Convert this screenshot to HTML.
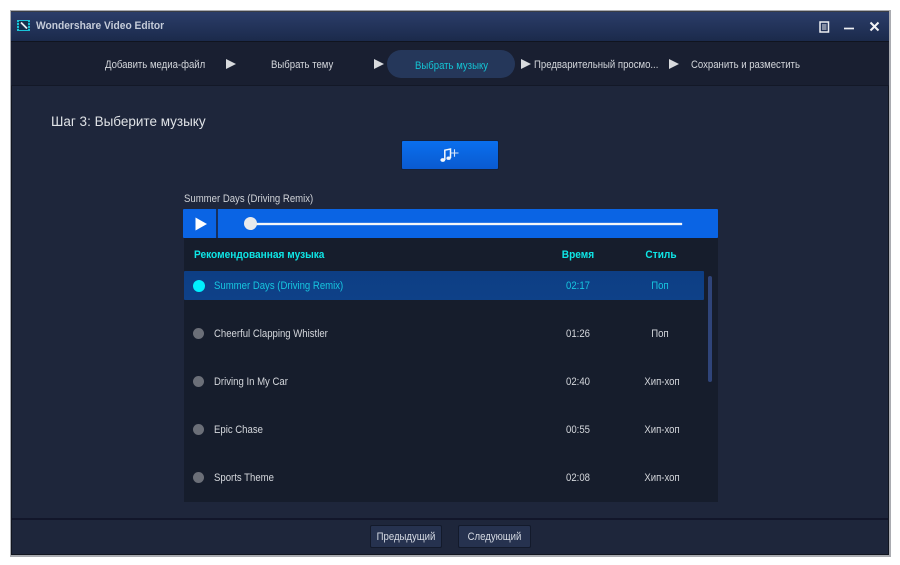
<!DOCTYPE html>
<html lang="ru"><head><meta charset="utf-8"><title>Wondershare Video Editor</title>
<style>
html,body{margin:0;padding:0;background:#fff;width:900px;height:565px;overflow:hidden}
body{position:relative;font-family:"Liberation Sans",sans-serif;color:#d4d7dc;font-size:11px}
div,span.t{position:absolute;box-sizing:border-box}
.t{white-space:nowrap;line-height:14px;height:14px;transform:scaleX(.87);transform-origin:0 50%}
.b{font-weight:bold;color:#0ee6e6;transform:scaleX(.92)}
svg{position:absolute;display:block}
.c{text-align:center;transform-origin:50% 50%}
</style></head><body>
<div style="left:10px;top:10px;width:881px;height:547px;background:#a9abb0"></div>
<div style="left:11px;top:11px;width:878px;height:544px;background:#1e263b;box-shadow:inset 0 0 0 1px #11151f"></div>
<div style="left:11px;top:11px;width:878px;height:30px;background:linear-gradient(#2b3d69,#1b2a4b);border-top:1px solid #3a3d44"></div>
<div style="left:11px;top:41px;width:878px;height:45px;background:#191f31;border-top:1px solid #10141f;border-bottom:1px solid #131827"></div>
<svg style="left:17px;top:20px" width="13" height="11" viewBox="0 0 13 11"><rect width="13" height="11" fill="#19c4d8"/><rect x="2" y="1" width="9" height="9" fill="#16304c"/><path d="M4 2.5l6 6" stroke="#e8eef2" stroke-width="1.8"/><path d="M0 2.5h2M0 5.5h2M0 8.5h2M11 2.5h2M11 5.5h2M11 8.5h2" stroke="#0d5a70"/></svg>
<span class="t" style="left:36px;top:19px;font-weight:bold;color:#c5ccd9;transform:scaleX(.93)">Wondershare Video Editor</span>
<svg style="left:819px;top:21px" width="61" height="12" viewBox="0 0 61 12"><rect x="1" y="1" width="8.5" height="10" fill="none" stroke="#eceef1" stroke-width="1.5"/><path d="M3 4h4.5M3 6h4.5M3 8h4.5" stroke="#e6e8ec"/><path d="M25 7.5h10" stroke="#eef0f3" stroke-width="1.7"/><path d="M51.5 1.5l8 8M59.5 1.5l-8 8" stroke="#f2f3f5" stroke-width="2"/></svg>

<span class="t" style="left:105px;top:58px">Добавить медиа-файл</span>
<svg style="left:226px;top:59px" width="10" height="10"><path d="M0 0l10 5-10 5z" fill="#d8dadd"/></svg>
<span class="t" style="left:271px;top:58px">Выбрать тему</span>
<svg style="left:374px;top:59px" width="10" height="10"><path d="M0 0l10 5-10 5z" fill="#d8dadd"/></svg>
<div style="left:387px;top:50px;width:128px;height:28px;border-radius:14px;background:#25375a"></div>
<span class="t" style="left:415px;top:59px;color:#14c4d4">Выбрать музыку</span>
<svg style="left:521px;top:59px" width="10" height="10"><path d="M0 0l10 5-10 5z" fill="#d8dadd"/></svg>
<span class="t" style="left:534px;top:58px">Предварительный просмо...</span>
<svg style="left:669px;top:59px" width="10" height="10"><path d="M0 0l10 5-10 5z" fill="#d8dadd"/></svg>
<span class="t" style="left:691px;top:58px">Сохранить и разместить</span>

<span class="t" style="left:51px;top:115px;font-size:13.5px;color:#dfe2e6;transform:none">Шаг 3: Выберите музыку</span>

<div style="left:401px;top:140px;width:98px;height:30px;background:linear-gradient(#0a6fee,#0a5ad0);border:1px solid #14213c;border-radius:2px"></div>
<svg style="left:440px;top:147px" width="20" height="16" viewBox="0 0 20 16"><path d="M4.8 13V3.2L10.5 2v9" fill="none" stroke="#f4f7fb" stroke-width="1.5"/><ellipse cx="2.8" cy="13" rx="2.4" ry="1.9" fill="#f4f7fb"/><ellipse cx="8.6" cy="11.2" rx="2.2" ry="1.7" fill="#f4f7fb"/><path d="M10.5 6h8M14.5 2.2v7.6" stroke="#d6e4f8" stroke-width="1.1"/></svg>

<span class="t" style="left:184px;top:192px;color:#cfd2d7">Summer Days (Driving Remix)</span>
<div style="left:183px;top:209px;width:535px;height:29px;background:#0a64e4;border-radius:1px"></div>
<div style="left:216px;top:209px;width:2px;height:29px;background:#16305e"></div>
<svg style="left:195px;top:217px" width="13" height="14"><path d="M0.5 0.5L12 7 0.5 13.5z" fill="#fff"/></svg>
<div style="left:250px;top:223px;width:432px;height:2px;background:#f4f6f8;box-shadow:0 0 1px #fff"></div>
<div style="left:244px;top:217px;width:13px;height:13px;border-radius:50%;background:#e9eaec"></div>

<div style="left:184px;top:238px;width:534px;height:264px;background:#161d2c"></div>
<span class="t b" style="left:194px;top:248px">Рекомендованная музыка</span>
<span class="t c b" style="left:548px;width:60px;top:248px">Время</span>
<span class="t c b" style="left:631px;width:60px;top:248px">Стиль</span>

<div style="left:184px;top:271px;width:520px;height:29px;background:linear-gradient(#0d3e84,#0e4188);border-radius:1px"></div>
<div style="left:708px;top:276px;width:4px;height:106px;background:#2f4479;border-radius:2px"></div>

<div style="left:193px;top:280px;width:12px;height:12px;border-radius:50%;background:#00f0ff"></div>
<span class="t" style="left:214px;top:279px;color:#17c6e0">Summer Days (Driving Remix)</span>
<span class="t c" style="left:548px;width:60px;top:279px;color:#17c6e0">02:17</span>
<span class="t c" style="left:630px;width:60px;top:279px;color:#17c6e0">Поп</span>

<div style="left:193px;top:328px;width:11px;height:11px;border-radius:50%;background:#6b6f78"></div>
<span class="t" style="left:214px;top:327px">Cheerful Clapping Whistler</span>
<span class="t c" style="left:548px;width:60px;top:327px">01:26</span>
<span class="t c" style="left:630px;width:60px;top:327px">Поп</span>

<div style="left:193px;top:376px;width:11px;height:11px;border-radius:50%;background:#6b6f78"></div>
<span class="t" style="left:214px;top:375px">Driving In My Car</span>
<span class="t c" style="left:548px;width:60px;top:375px">02:40</span>
<span class="t c" style="left:632px;width:60px;top:375px">Хип-хоп</span>

<div style="left:193px;top:424px;width:11px;height:11px;border-radius:50%;background:#6b6f78"></div>
<span class="t" style="left:214px;top:423px">Epic Chase</span>
<span class="t c" style="left:548px;width:60px;top:423px">00:55</span>
<span class="t c" style="left:632px;width:60px;top:423px">Хип-хоп</span>

<div style="left:193px;top:472px;width:11px;height:11px;border-radius:50%;background:#6b6f78"></div>
<span class="t" style="left:214px;top:471px">Sports Theme</span>
<span class="t c" style="left:548px;width:60px;top:471px">02:08</span>
<span class="t c" style="left:632px;width:60px;top:471px">Хип-хоп</span>

<div style="left:12px;top:518px;width:876px;height:2px;background:#12162a"></div>
<div style="left:370px;top:525px;width:72px;height:23px;background:#26324f;border:1px solid #131a2b;border-radius:2px"></div>
<span class="t c" style="left:370px;width:72px;top:530px;color:#d6dbe4">Предыдущий</span>
<div style="left:458px;top:525px;width:73px;height:23px;background:#26324f;border:1px solid #131a2b;border-radius:2px"></div>
<span class="t c" style="left:458px;width:73px;top:530px;color:#d6dbe4">Следующий</span>
</body></html>
